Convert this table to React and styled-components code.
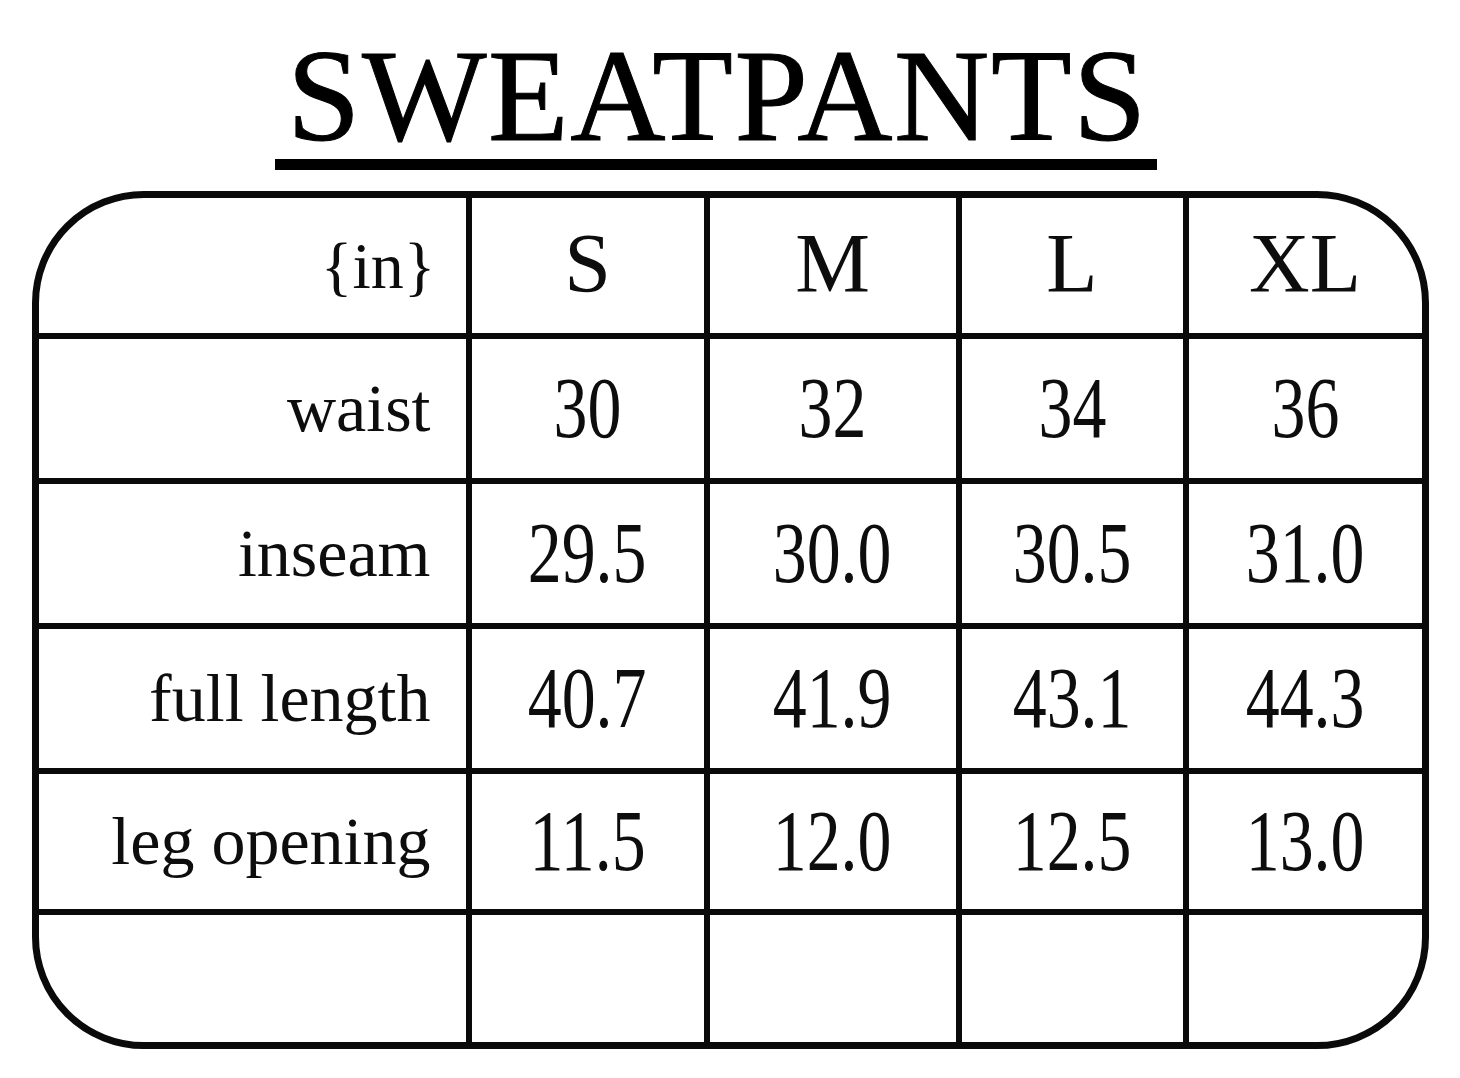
import styled, { createGlobalStyle } from "styled-components";

const GlobalStyle = createGlobalStyle`
  html, body {
    margin: 0;
    padding: 0;
    background: #ffffff;
  }
  body {
    font-family: "Liberation Serif", "Times New Roman", serif;
    color: #0d0d0d;
  }
`;

const sizes = ["S", "M", "L", "XL"];

const rows = [
  { label: "waist", values: ["30", "32", "34", "36"] },
  { label: "inseam", values: ["29.5", "30.0", "30.5", "31.0"] },
  { label: "full length", values: ["40.7", "41.9", "43.1", "44.3"] },
  { label: "leg opening", values: ["11.5", "12.0", "12.5", "13.0"] },
  { label: "", values: ["", "", "", ""] },
];

const App = () => {
  return (
    <Page>
      <GlobalStyle />
      <Header>
        <Title>SWEATPANTS</Title>
      </Header>
      <Chart>
        <LabelCell $unit>{"{in}"}</LabelCell>
        {sizes.map((size, i) => (
          <ValueCell key={size} $last={i === sizes.length - 1}>
            <SizeText>{size}</SizeText>
          </ValueCell>
        ))}
        {rows.map((row, r) => (
          <Row key={r} row={row} bottom={r === rows.length - 1} />
        ))}
      </Chart>
    </Page>
  );
};

const Row = ({ row, bottom }) => (
  <>
    <LabelCell $bottom={bottom}>{row.label}</LabelCell>
    {row.values.map((v, i) => (
      <ValueCell key={i} $bottom={bottom} $last={i === row.values.length - 1}>
        <Number>{v}</Number>
      </ValueCell>
    ))}
  </>
);

const Page = styled.div`
  width: 1460px;
  min-height: 1078px;
  padding-top: 32px;
  box-sizing: border-box;
`;

const Header = styled.div`
  display: flex;
  justify-content: center;
  padding-right: 28px;
`;

const Title = styled.h1`
  margin: 0;
  padding: 0 9px 0 12px;
  font-family: "Liberation Serif", "Times New Roman", serif;
  font-weight: 400;
  font-size: 132px;
  line-height: 127px;
  letter-spacing: 1.5px;
  color: #000;
  border-bottom: 11px solid #000;
  -webkit-text-stroke: 1px #000;
`;

const Chart = styled.div`
  margin: 21px auto 0;
  width: 1397px;
  box-sizing: border-box;
  border: 7px solid #0a0a0a;
  border-radius: 112px;
  overflow: hidden;
  display: grid;
  grid-template-columns: 433px 238px 252px 227px 233px;
  grid-template-rows: 141px 145px 145px 145px 141px 127px;
`;

const Cell = styled.div`
  display: flex;
  align-items: center;
  box-sizing: border-box;
  border-bottom: ${(p) => (p.$bottom ? "none" : "6px solid #0a0a0a")};
  border-right: ${(p) => (p.$last ? "none" : "6px solid #0a0a0a")};
`;

const LabelCell = styled(Cell)`
  justify-content: flex-end;
  padding-right: ${(p) => (p.$unit ? "30px" : "35px")};
  font-size: ${(p) => (p.$unit ? "66px" : "68px")};
`;

const ValueCell = styled(Cell)`
  justify-content: center;
`;

const SizeText = styled.span`
  font-size: 84px;
  line-height: 1;
  padding-bottom: 4px;
`;

const Number = styled.span`
  display: inline-block;
  font-size: 87px;
  line-height: 1;
  transform: scaleX(0.78);
  padding-bottom: 2px;
`;

export default App;
